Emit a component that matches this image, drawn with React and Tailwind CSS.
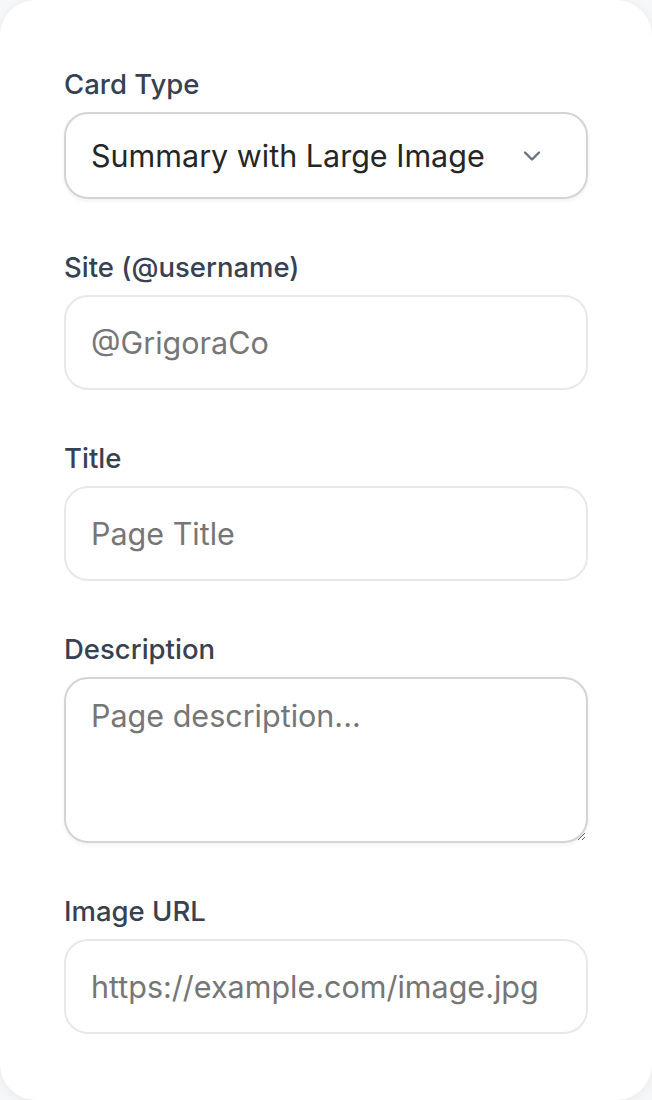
import React, { useState } from "react";

const font = { fontFamily: "Inter, 'Noto Sans', sans-serif" };

const Field = ({ label, children }) => (
  <div className="flex flex-col">
    <label className="mb-[8px] text-[27.5px] leading-[40px] font-medium text-[#374151]">
      {label}
    </label>
    {children}
  </div>
);

const inputClass =
  "w-full h-[95px] px-[25px] rounded-[24px] border-2 border-[#e8e8ea] bg-white text-[30.5px] text-[#1f2937] placeholder:text-[#767676] outline-none";

const App = () => {
  const [cardType, setCardType] = useState("summary_large_image");

  return (
    <div className="min-h-[1100px] bg-[#f6f7f9]" style={font}>
      <div className="w-[652px] min-h-[1100px] bg-white rounded-[36px] shadow-[0_2px_12px_rgba(0,0,0,0.06)] px-[64px] pt-[64px] pb-[60px]">
        <div className="flex flex-col gap-[48px]">
          <Field label="Card Type">
            <div className="relative">
              <select
                value={cardType}
                onChange={(e) => setCardType(e.target.value)}
                className="w-full h-[87px] appearance-none pl-[25px] pr-[80px] rounded-[24px] border-2 border-[#d4d4d6] bg-white shadow-[0_2px_4px_rgba(0,0,0,0.06)] text-[30.5px] text-[#262626] outline-none"
              >
                <option value="summary">Summary</option>
                <option value="summary_large_image">Summary with Large Image</option>
              </select>
              <svg
                className="absolute right-[47px] top-1/2 -translate-y-1/2 pointer-events-none"
                width="18"
                height="11"
                viewBox="0 0 18 11"
                fill="none"
              >
                <path
                  d="M2 2l7 7 7-7"
                  stroke="#6b7280"
                  strokeWidth="2.4"
                  strokeLinecap="round"
                  strokeLinejoin="round"
                />
              </svg>
            </div>
          </Field>

          <Field label="Site (@username)">
            <input type="text" placeholder="@GrigoraCo" className={inputClass} />
          </Field>

          <Field label="Title">
            <input type="text" placeholder="Page Title" className={inputClass} />
          </Field>

          <Field label="Description">
            <textarea
              placeholder="Page description..."
              className="w-full h-[166px] px-[25px] pt-[15px] rounded-[24px] border-2 border-[#d4d4d6] bg-white shadow-[0_2px_4px_rgba(0,0,0,0.05)] text-[30.5px] leading-[44px] text-[#1f2937] placeholder:text-[#767676] outline-none"
            />
          </Field>

          <Field label="Image URL">
            <input
              type="text"
              placeholder="https://example.com/image.jpg"
              className={inputClass}
            />
          </Field>
        </div>
      </div>
    </div>
  );
};

export default App;
